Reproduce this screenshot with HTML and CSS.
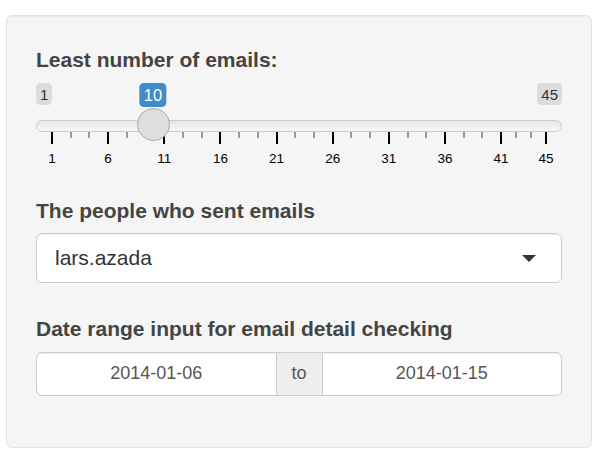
FILE: index.html
```html
<!DOCTYPE html>
<html>
<head>
<meta charset="utf-8">
<link rel="stylesheet" href="styles.css">
</head>
<body>
<div class="well">
  <div class="group">
    <label class="label">Least number of emails:</label>
    <div class="irs">
      <span class="irs-min">1</span>
      <span class="irs-max">45</span>
      <span class="irs-single" style="left:117px">10</span>
      <span class="irs-line"></span>
      <div class="grid">
        <span class="pol" style="left:16px"></span>
        <span class="pol small" style="left:34.7px"></span>
        <span class="pol small" style="left:53.4px"></span>
        <span class="pol" style="left:72.1px"></span>
        <span class="pol small" style="left:90.8px"></span>
        <span class="pol small" style="left:109.6px"></span>
        <span class="pol" style="left:128.3px"></span>
        <span class="pol small" style="left:147px"></span>
        <span class="pol small" style="left:165.7px"></span>
        <span class="pol" style="left:184.4px"></span>
        <span class="pol small" style="left:203.1px"></span>
        <span class="pol small" style="left:221.8px"></span>
        <span class="pol" style="left:240.5px"></span>
        <span class="pol small" style="left:259.2px"></span>
        <span class="pol small" style="left:278px"></span>
        <span class="pol" style="left:296.7px"></span>
        <span class="pol small" style="left:315.4px"></span>
        <span class="pol small" style="left:334.1px"></span>
        <span class="pol" style="left:352.8px"></span>
        <span class="pol small" style="left:371.5px"></span>
        <span class="pol small" style="left:390.2px"></span>
        <span class="pol" style="left:409px"></span>
        <span class="pol small" style="left:427.7px"></span>
        <span class="pol small" style="left:446.4px"></span>
        <span class="pol" style="left:465.1px"></span>
        <span class="pol small" style="left:480.1px"></span>
        <span class="pol small" style="left:495px"></span>
        <span class="pol" style="left:510px"></span>
        <span class="txt" style="left:16px">1</span>
        <span class="txt" style="left:72.1px">6</span>
        <span class="txt" style="left:128.3px">11</span>
        <span class="txt" style="left:184.4px">16</span>
        <span class="txt" style="left:240.5px">21</span>
        <span class="txt" style="left:296.7px">26</span>
        <span class="txt" style="left:352.8px">31</span>
        <span class="txt" style="left:409px">36</span>
        <span class="txt" style="left:465.1px">41</span>
        <span class="txt" style="left:510px">45</span>
      </div>
      <span class="handle" style="left:117px"></span>
    </div>
  </div>
  <div class="group group-select">
    <label class="label">The people who sent emails</label>
    <div class="select">
      <span class="select-value">lars.azada</span>
      <span class="caret"></span>
    </div>
  </div>
  <div class="group">
    <label class="label">Date range input for email detail checking</label>
    <div class="daterange">
      <div class="date-input first">2014-01-06</div>
      <div class="addon">to</div>
      <div class="date-input last">2014-01-15</div>
    </div>
  </div>
</div>
</body>
</html>
```

FILE: styles.css
```css
* { box-sizing: border-box; }
html, body {
  margin: 0;
  padding: 0;
  background: #ffffff;
  font-family: "Liberation Sans", Arial, Helvetica, sans-serif;
  color: #333;
}
.well {
  margin: 15px 0 0 6px;
  width: 586px;
  height: 433px;
  padding: 28.5px 29px;
  background: #f5f5f5;
  border: 1px solid #e3e3e3;
  border-radius: 6px;
  box-shadow: inset 0 1px 1px rgba(0,0,0,0.05);
}
.group {
  margin-bottom: 22.5px;
}
.group-select {
  margin-bottom: 31px;
}
.label {
  display: block;
  font-size: 21px;
  line-height: 30px;
  font-weight: bold;
  color: #444;
  margin-bottom: 7.5px;
}
.irs {
  position: relative;
  height: 91px;
}
.irs-min, .irs-max {
  position: absolute;
  top: 1px;
  font-size: 15px;
  line-height: 19px;
  padding: 1.5px 4px;
  background: rgba(0,0,0,0.1);
  border-radius: 4.5px;
  color: #333;
}
.irs-min { left: 0; }
.irs-max { right: 0; }
.irs-single {
  position: absolute;
  top: 1px;
  transform: translateX(-50%);
  font-size: 16.5px;
  line-height: 21px;
  padding: 1.5px 4.5px;
  background: #428bca;
  color: #fff;
  border-radius: 4.5px;
}
.irs-line {
  position: absolute;
  left: 0;
  right: 0;
  top: 38px;
  height: 12px;
  border: 1px solid #cccccc;
  border-radius: 12px;
  background: linear-gradient(to bottom, #dedede -50%, #ffffff 150%);
}
.grid {
  position: absolute;
  left: 0;
  right: 0;
  top: 49.5px;
  height: 40px;
}
.pol {
  position: absolute;
  top: 0;
  width: 2px;
  height: 12px;
  margin-left: -1px;
  background: #000;
}
.pol.small {
  height: 6.5px;
  background: #999;
}
.txt {
  position: absolute;
  top: 19px;
  transform: translateX(-50%);
  font-size: 13.5px;
  line-height: 16px;
  color: #000;
}
.handle {
  position: absolute;
  top: 26px;
  width: 33px;
  height: 33px;
  margin-left: -16.5px;
  border: 1px solid #aaaaaa;
  border-radius: 50%;
  background: #dedede;
}
.select {
  display: flex;
  align-items: center;
  justify-content: space-between;
  height: 50px;
  padding: 0 25.5px 0 18px;
  background: #fff;
  border: 1px solid #cccccc;
  border-radius: 6px;
  box-shadow: inset 0 1px 1px rgba(0,0,0,0.075);
}
.select-value {
  font-size: 21px;
  line-height: 30px;
  color: #333;
}
.caret {
  width: 0;
  height: 0;
  border-style: solid;
  border-width: 7.5px 7.5px 0 7.5px;
  border-color: #333 transparent transparent transparent;
}
.daterange {
  display: flex;
  height: 44.5px;
}
.date-input {
  flex: 1;
  display: flex;
  align-items: center;
  justify-content: center;
  background: #fff;
  border: 1px solid #cccccc;
  font-size: 18px;
  color: #555;
  box-shadow: inset 0 1px 1px rgba(0,0,0,0.075);
}
.date-input.first { border-radius: 6px 0 0 6px; }
.date-input.last { border-radius: 0 6px 6px 0; }
.addon {
  width: 45px;
  display: flex;
  align-items: center;
  justify-content: center;
  background: #eeeeee;
  border-top: 1px solid #cccccc;
  border-bottom: 1px solid #cccccc;
  font-size: 18px;
  color: #555;
}
```
